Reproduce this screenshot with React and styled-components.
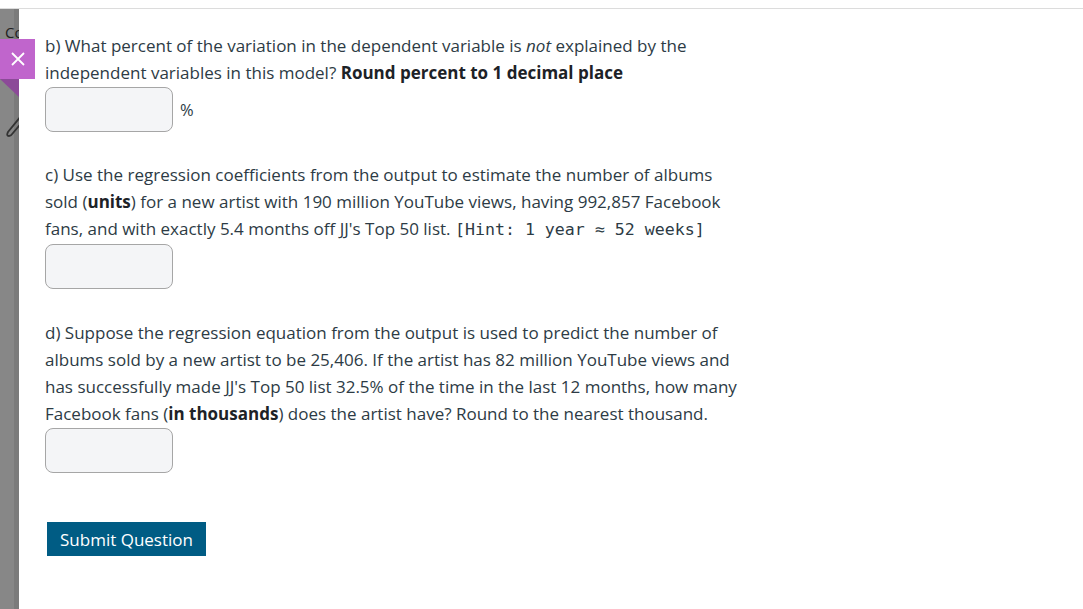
import React from "react";
import styled, { createGlobalStyle } from "styled-components";

const GlobalStyle = createGlobalStyle`
  html, body {
    margin: 0;
    padding: 0;
    background: #fff;
  }
  body {
    font-family: "Open Sans", "Noto Sans", sans-serif;
  }
`;

const Page = styled.div`
  padding-top: 8px;
  height: 609px;
  box-sizing: border-box;
  overflow: hidden;
`;

const Frame = styled.div`
  display: flex;
  border-top: 1px solid #dcdcdc;
  height: 100%;
  position: relative;
`;

const Sidebar = styled.div`
  width: 19px;
  flex-shrink: 0;
  background: linear-gradient(to right, #878787 0, #878787 14px, #7b7b7b 14px);
  overflow: hidden;
  position: relative;
`;

const SideLabel = styled.div`
  font-family: "Open Sans", sans-serif;
  font-size: 15px;
  color: #222;
  padding: 13px 0 0 5px;
  white-space: nowrap;
`;

const Fold = styled.div`
  position: absolute;
  top: 70px;
  left: 0;
  width: 0;
  height: 0;
  border-top: 18px solid #8c4a98;
  border-left: 19px solid transparent;
`;

const Pencil = styled.svg`
  position: absolute;
  top: 103px;
  left: 5px;
`;

const CloseButton = styled.button`
  position: absolute;
  top: 30px;
  left: 0;
  width: 35px;
  height: 40px;
  border: none;
  padding: 0;
  background: #c065cc;
  display: flex;
  align-items: center;
  justify-content: center;
  cursor: pointer;
`;

const Content = styled.div`
  padding: 23px 0 0 26px;
  color: #2d3b45;
  font-size: 17px;
  line-height: 27px;
`;

const Para = styled.p`
  margin: 0;
  width: 702px;
`;

const Strong = styled.b`
  font-weight: 700;
  color: #1d2227;
`;

const Code = styled.code`
  font-family: "DejaVu Sans Mono", "Liberation Mono", monospace;
  font-size: 16.6px;
  color: #2d3b45;
`;

const AnswerRow = styled.div`
  display: flex;
  align-items: center;
  gap: 7px;
  margin: 1px 0 ${(p) => p.$after}px;
`;

const Answer = styled.input`
  width: 128px;
  height: 45px;
  box-sizing: border-box;
  border: 1px solid #a6a6a6;
  border-radius: 8px;
  background: #f4f5f7;
  outline: none;
`;

const Unit = styled.span`
  font-size: 16.5px;
  color: #2d3b45;
`;

const Submit = styled.button`
  margin-left: 2px;
  height: 34px;
  padding: 0 13px;
  border: none;
  background: #005c84;
  color: #fff;
  font-family: "Open Sans", sans-serif;
  font-size: 17px;
  cursor: pointer;
`;

export default function App() {
  return (
    <>
      <GlobalStyle />
      <Page>
        <Frame>
          <Sidebar>
            <SideLabel>Co</SideLabel>
            <Fold />
            <Pencil width="20" height="30" viewBox="0 0 20 30">
              <path
                d="M16 4 L3 20 Q1 24 4 24 Q6 24 8 21 L19 8"
                fill="none"
                stroke="#333"
                strokeWidth="1.8"
                strokeLinecap="round"
              />
            </Pencil>
          </Sidebar>
          <CloseButton aria-label="close">
            <svg width="14" height="14" viewBox="0 0 14 14">
              <path d="M1 1 L13 13 M13 1 L1 13" stroke="#fff" strokeWidth="1.8" />
            </svg>
          </CloseButton>
          <Content>
            <Para>
              b) What percent of the variation in the dependent variable is{" "}
              <i>not</i> explained by the independent variables in this model?{" "}
              <Strong>Round percent to 1 decimal place</Strong>
            </Para>
            <AnswerRow $after={29}>
              <Answer />
              <Unit>%</Unit>
            </AnswerRow>
            <Para>
              c) Use the regression coefficients from the output to estimate the
              number of albums sold (<Strong>units</Strong>) for a new artist with
              190 million YouTube views, having 992,857 Facebook fans, and with
              exactly 5.4 months off JJ's Top 50 list.{" "}
              <Code>[Hint: 1 year ≈ 52 weeks]</Code>
            </Para>
            <AnswerRow $after={30}>
              <Answer />
            </AnswerRow>
            <Para>
              d) Suppose the regression equation from the output is used to
              predict the number of albums sold by a new artist to be 25,406. If
              the artist has 82 million YouTube views and has successfully made
              JJ's Top 50 list 32.5% of the time in the last 12 months, how many
              Facebook fans (<Strong>in thousands</Strong>) does the artist have?
              Round to the nearest thousand.
            </Para>
            <AnswerRow $after={49}>
              <Answer />
            </AnswerRow>
            <Submit>Submit Question</Submit>
          </Content>
        </Frame>
      </Page>
    </>
  );
}
